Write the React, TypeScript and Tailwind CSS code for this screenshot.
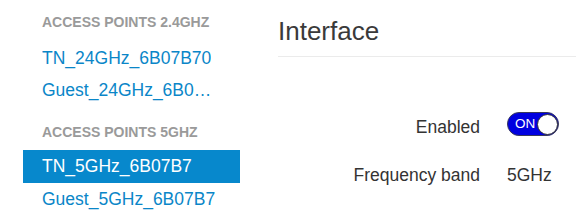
import React from "react";

const font = { fontFamily: '"Liberation Sans", Arial, Helvetica, sans-serif' };

function Header({ children, className = "" }: { children: React.ReactNode; className?: string }) {
  return (
    <div className={`pl-[19px] text-[14px] leading-[16px] font-bold text-[#9a9a9a] uppercase ${className}`}>
      {children}
    </div>
  );
}

function Item({ label, selected = false }: { label: string; selected?: boolean }) {
  return (
    <div
      className={`flex items-center pl-[19px] pr-[20px] text-[17.5px] ${
        selected ? "h-[33px] bg-[#0788cc] text-white" : "h-8 text-[#0a86c8]"
      }`}
    >
      <span className="truncate">{label}</span>
    </div>
  );
}

export default function App() {
  return (
    <div className="flex w-[576px] h-[218px] bg-white overflow-hidden" style={font}>
      <div className="ml-[23px] w-[217px] flex flex-col">
        <Header className="mt-[14px] mb-3">Access Points 2.4GHz</Header>
        <Item label="TN_24GHz_6B07B70" />
        <Item label="Guest_24GHz_6B07B70" />
        <Header className="mt-[18px] mb-[10px]">Access Points 5GHz</Header>
        <Item label="TN_5GHz_6B07B7" selected />
        <Item label="Guest_5GHz_6B07B7" />
      </div>
      <div className="ml-[38px] flex-1 flex flex-col">
        <div className="mt-[15px] h-[42px] border-b border-[#ebebeb] text-[26px] leading-[32px] text-[#3a3a3a]">
          Interface
        </div>
        <div className="mt-[46px] flex flex-col">
          <div className="flex items-center h-12">
            <div className="w-[202px] text-right text-[17.5px] text-[#333333]">Enabled</div>
            <div className="ml-[27px] mb-[6px]">
              <div className="flex items-center justify-between w-[52px] h-[24px] rounded-full bg-[#0000e0] border-[1.5px] border-[#3a3a5a] pl-[7px] pr-0">
                <span className="text-white text-[13.5px] leading-none">ON</span>
                <span className="w-[21px] h-[21px] rounded-full bg-white border-[1.5px] border-[#333333]" />
              </div>
            </div>
          </div>
          <div className="flex items-center h-12">
            <div className="w-[202px] text-right text-[17.5px] text-[#333333]">Frequency band</div>
            <div className="ml-[27px] text-[17.5px] text-[#333333]">5GHz</div>
          </div>
        </div>
      </div>
    </div>
  );
}
